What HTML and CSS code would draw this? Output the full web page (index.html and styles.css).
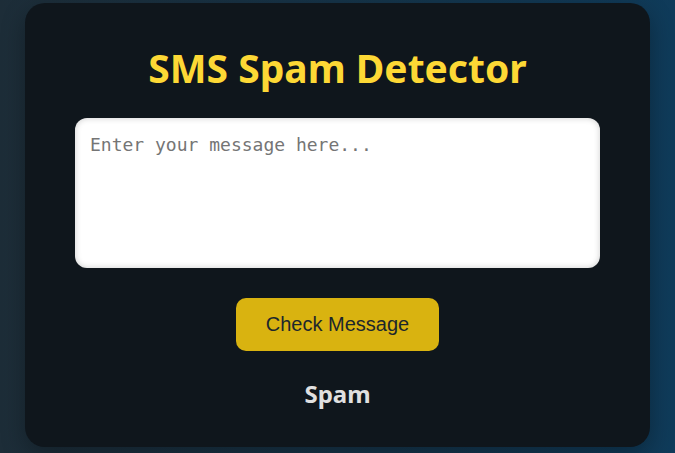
FILE: index.html
```html
<!DOCTYPE html>
<html lang="en">
<head>
  <meta charset="utf-8">
  <meta name="viewport" content="width=device-width, initial-scale=1">
  <title>SMS Spam Detector</title>
  <link rel="stylesheet" href="styles.css">
</head>
<body>
  <main class="card">
    <h1 class="title" id="title">SMS Spam Detector</h1>
    <form class="form">
      <textarea class="message" name="message" aria-labelledby="title" placeholder="Enter your message here..."></textarea>
      <button class="submit" type="button">Check Message</button>
    </form>
    <h2 class="result">Spam</h2>
  </main>
</body>
</html>
```

FILE: styles.css
```css
* {
  box-sizing: border-box;
}

body {
  margin: 0;
  min-height: 100vh;
  padding: 3px 25px 6px;
  display: flex;
  justify-content: center;
  align-items: flex-start;
  background: linear-gradient(to right, #1d2d38, #0f3b5a);
  font-family: "Segoe UI", "Noto Sans", "Open Sans", sans-serif;
}

.card {
  width: 100%;
  max-width: 640px;
  padding: 39px 50px 37px;
  border-radius: 20px;
  background: #0f161c;
  box-shadow: 0 8px 24px rgba(0, 0, 0, 0.3);
  text-align: center;
}

.title {
  margin: 0 0 24px;
  font-size: 39px;
  line-height: 52px;
  font-weight: 700;
  color: #fdd835;
}

.form {
  display: flex;
  flex-direction: column;
  align-items: center;
  gap: 30px;
}

.message {
  display: block;
  width: 100%;
  height: 150px;
  padding: 15px;
  border: none;
  border-radius: 12px;
  background: #fff;
  box-shadow: inset 0 0 6px rgba(0, 0, 0, 0.2);
  color: #222;
  font-family: "DejaVu Sans Mono", monospace;
  font-size: 18px;
  line-height: 24px;
  resize: none;
}

.message::placeholder {
  color: #757575;
  opacity: 1;
}

.submit {
  padding: 15px 30px;
  border: none;
  border-radius: 10px;
  background: #d9b310;
  color: #1c272c;
  font-family: "Liberation Sans", Arial, sans-serif;
  font-size: 20px;
  line-height: 23px;
  cursor: pointer;
}

.result {
  margin: 27px 0 0;
  font-size: 24px;
  line-height: 32px;
  font-weight: 700;
  color: #e0e0e0;
}
```
